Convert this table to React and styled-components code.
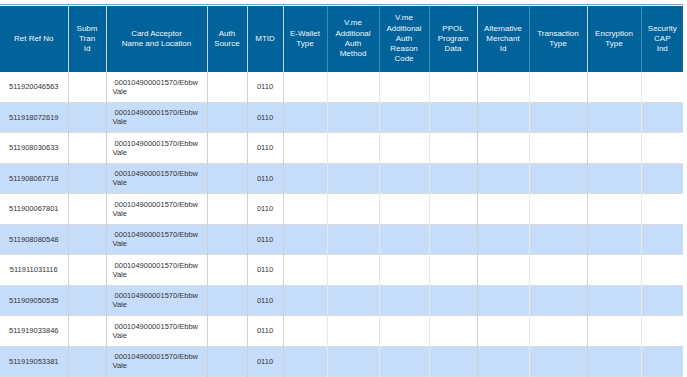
import React from 'react';
import styled, { createGlobalStyle } from 'styled-components';

const columns = [
  { label: 'Ret Ref No', width: 68, strong: true },
  { label: 'Subm\nTran\nId', width: 38, strong: true },
  { label: 'Card Acceptor\nName and Location', width: 101, strong: true, left: true },
  { label: 'Auth\nSource', width: 40, strong: true },
  { label: 'MTID', width: 36, strong: true },
  { label: 'E-Wallet\nType', width: 44 },
  { label: 'V.me\nAdditional\nAuth\nMethod', width: 52 },
  { label: 'V.me\nAdditional\nAuth\nReason\nCode', width: 50 },
  { label: 'PPOL\nProgram\nData', width: 48, strong: true },
  { label: 'Alternative\nMerchant\nId', width: 52 },
  { label: 'Transaction\nType', width: 58, strong: true },
  { label: 'Encryption\nType', width: 54 },
  { label: 'Security\nCAP\nInd', width: 42 },
];

const refs = [
  '511920046563',
  '511918072619',
  '511908030633',
  '511908067718',
  '511900067801',
  '511908080548',
  '511911031116',
  '511909050535',
  '511919033846',
  '511919053381',
];

const GlobalStyle = createGlobalStyle`
  body {
    margin: 0;
    background: #fff;
    font-family: "Liberation Sans", Arial, sans-serif;
  }
`;

const Page = styled.div`
  padding-top: 4px;
  width: 683px;
`;

const TopRule = styled.div`
  border-top: 1px solid #6fa3c4;
  margin-bottom: 1px;
`;

const Grid = styled.table`
  width: 683px;
  table-layout: fixed;
  border-collapse: collapse;
`;

const HeadCell = styled.th`
  height: 66px;
  padding: 0 3px;
  background: #016399;
  color: #f2f6fa;
  font-weight: normal;
  font-size: 8px;
  line-height: 10.3px;
  text-align: center;
  vertical-align: middle;
  white-space: pre-line;
  border-left: 1px solid ${(p) => (p.$strong ? '#c9d3dc' : '#3f88b8')};
  &:first-child {
    border-left: none;
  }
`;

const Row = styled.tr`
  background: ${(p) => (p.$alt ? '#c5ddfb' : '#fff')};
  border-bottom: 1px solid #dcdcdc;
`;

const Cell = styled.td`
  height: 29.5px;
  padding: 0 6px;
  font-size: 7.5px;
  line-height: 9px;
  color: #333;
  text-align: ${(p) => (p.$left ? 'left' : 'center')};
  vertical-align: middle;
  border-left: 1px solid ${(p) => (p.$strong ? '#d0d0d0' : '#e8e8e8')};
  &:first-child {
    border-left: none;
  }
`;

function App() {
  const valuesFor = (ref) => [
    ref,
    '',
    '\u00a0000104900001570/Ebbw Vale',
    '',
    '0110',
    '', '', '', '', '', '', '', '',
  ];

  return (
    <Page>
      <GlobalStyle />
      <TopRule />
      <Grid>
        <colgroup>
          {columns.map((col, i) => (
            <col key={i} style={{ width: col.width }} />
          ))}
        </colgroup>
        <thead>
          <tr>
            {columns.map((col, i) => (
              <HeadCell key={i} $strong={i > 0 && columns[i - 1].strong}>
                {col.label}
              </HeadCell>
            ))}
          </tr>
        </thead>
        <tbody>
          {refs.map((ref, r) => (
            <Row key={ref} $alt={r % 2 === 1}>
              {valuesFor(ref).map((value, i) => (
                <Cell
                  key={i}
                  $left={columns[i].left}
                  $strong={i > 0 && columns[i - 1].strong}
                >
                  {value}
                </Cell>
              ))}
            </Row>
          ))}
        </tbody>
      </Grid>
    </Page>
  );
}

export default App;
